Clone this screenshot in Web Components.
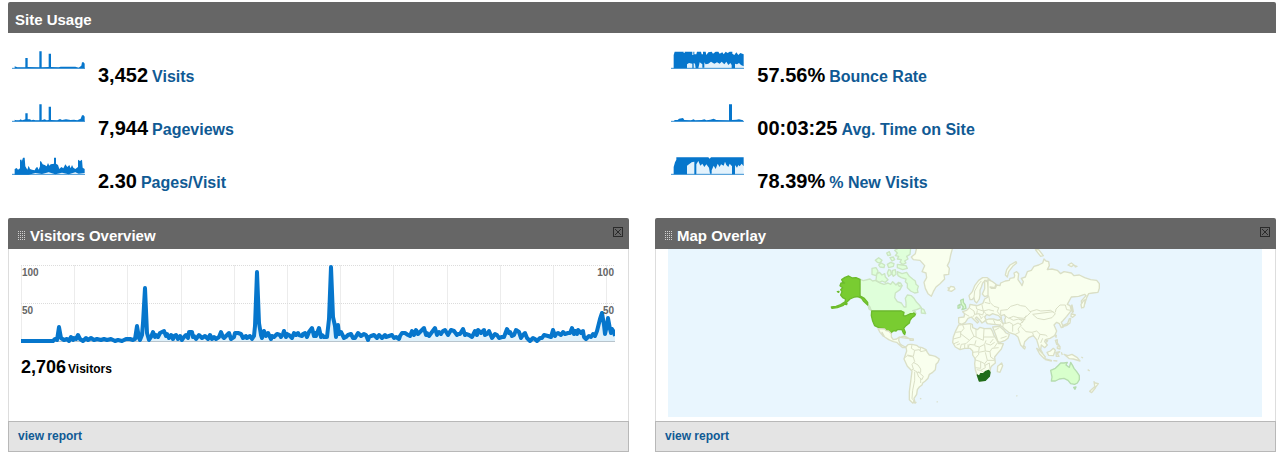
<!DOCTYPE html>
<html lang="en">
<head>
<meta charset="utf-8">
<title>Dashboard</title>
<style>
  body {
    margin: 2px 7px 4px 8px;
    background: #fff;
    color: #000;
    font-family: "Liberation Sans", Arial, sans-serif;
    font-weight: bold;
    --bar: #666666;
    --link: #105a94;
    --data: #0676cc;
  }
</style>
</head>
<body>
<usage-section heading="Site Usage">
  <usage-metric spark="visits" value="3,452">Visits</usage-metric>
  <usage-metric spark="bounce" value="57.56%">Bounce Rate</usage-metric>
  <usage-metric spark="pageviews" value="7,944">Pageviews</usage-metric>
  <usage-metric spark="time" value="00:03:25">Avg. Time on Site</usage-metric>
  <usage-metric spark="pages" value="2.30">Pages/Visit</usage-metric>
  <usage-metric spark="fresh" value="78.39%">% New Visits</usage-metric>
</usage-section>
<panel-row>
  <report-panel heading="Visitors Overview">
    <visitor-chart total="2,706">Visitors</visitor-chart>
  </report-panel>
  <report-panel heading="Map Overlay">
    <world-map></world-map>
  </report-panel>
</panel-row>

<script>
// filled shapes, 219 x 54 grid, baseline at 52
const SPARKS = {
  visits: { area: "M8 52V46L16 49H40V21H47V48L82 49V1H89V49L110 48V8H117V48L140 49 146 47H190L200 50 208 44 210 34H215L218 38V52Z" },
  pageviews: { area: "M8 52V47L12 49 22 49 26 46 30 49 36 47 40 46V28H47V46L54 46 58 49 64 47 70 49H82V1H89V49L98 46 104 49 110 48V8H117V48L136 49 144 45 150 48 162 46 176 48 186 47 196 49 206 44 210 34H215L218 38V52Z" },
  pages: { area: "M8 53V36L14 33 18 38 24 34V8H29V14L33 2H38L40 28 46 38 50 26 54 36 60 38 68 40 72 32 76 30 80 38 84 28V12L88 14 92 22 98 24 104 28 108 18 112 26 116 22 126 20V2H132V20L138 24 142 36 148 30 154 34 160 22 166 30 172 24 176 34 180 24 184 32 190 36 198 30V8L204 12 210 8 212 32 218 36V48L200 50 190 46 170 52 150 47 130 52 110 46 90 51 70 48 50 53Z" },
  bounce: {
    area: "M8 52V12L11 2H38V6H41V2H64V12H67V2H70V10H76L78 2H90L92 10H96V2H104L106 12 112 4 122 2 126 8 134 2H142L146 8 154 4 158 10 164 2 170 6 176 2H184V8L190 12 196 4 202 12 208 6 218 10V46L210 42 204 36 198 40 192 38V52H182V42L178 36 172 42 166 32 160 40 152 32 146 38 138 34 130 38 120 32 112 38 104 40 100 34V50H94V40L86 34 82 52H74L72 38 68 36V52H64V38L54 36 48 40V52Z",
    wash: "M45 32H218V52H45z"
  },
  time: { area: "M10 52V48L20 48 24 44 36 42 40 48 60 49 68 46 72 49 92 48 100 46 106 49 118 47 128 44 136 48 174 49V1H183V48L196 47 204 46 216 49V52Z" },
  fresh: {
    area: "M8 52V30L12 16 16 8V1H112L116 5 120 1H218V28L212 20 206 28 202 24 198 32 192 24V52H183V28L176 20 172 30 166 24 162 14 158 26 150 22 146 30 140 20 134 36 128 26 122 40V50H117L114 32 106 22 100 30 94 20 88 26 82 12 76 22V52H70V14L62 16 54 22 48 26V52Z",
    wash: "M45 14H218V52H45z"
  }
};

class UsageSection extends HTMLElement {
  constructor() {
    super();
    this.attachShadow({ mode: "open" });
    const template = document.createElement("template");
    template.innerHTML = `
      <style>
        :host { display: block; margin-bottom: 25px; }
        h2 {
          margin: 0;
          padding: 4px 7px 0;
          border-radius: 2px 2px 0 0;
          background: var(--bar);
          color: #fff;
          font-size: 15px;
          line-height: 27px;
        }
        .grid {
          display: grid;
          grid-template-columns: 52fr 48fr;
          row-gap: 17px;
          padding: 18px 0 0;
        }
      </style>
      <h2></h2>
      <div class="grid"><slot></slot></div>
    `;
    this.shadowRoot.appendChild(template.content.cloneNode(true));
  }

  connectedCallback() {
    this.shadowRoot.querySelector("h2").textContent = this.getAttribute("heading");
  }
}

class UsageMetric extends HTMLElement {
  constructor() {
    super();
    this.attachShadow({ mode: "open" });
    const template = document.createElement("template");
    template.innerHTML = `
      <style>
        :host { display: flex; gap: 13px; padding-left: 4px; }
        svg { flex: none; width: 73px; height: 18px; }
        .area { fill: var(--data); }
        .wash { fill: #e3f2fc; }
        .base { stroke: #3a91d3; stroke-width: 3; }
        p {
          display: flex;
          align-items: baseline;
          gap: 4px;
          margin: 12px 0 0;
          font-size: 16px;
          line-height: 20px;
        }
        strong { font-size: 20px; line-height: 24px; }
        a { color: var(--link); text-decoration: none; }
      </style>
      <svg viewBox="0 0 219 54" aria-hidden="true">
        <path class="wash"/>
        <path class="base" d="M0 52H219"/>
        <path class="area"/>
      </svg>
      <p><strong></strong><a href="#"><slot></slot></a></p>
    `;
    this.shadowRoot.appendChild(template.content.cloneNode(true));
  }

  connectedCallback() {
    const spark = SPARKS[this.getAttribute("spark")];
    this.shadowRoot.querySelector("strong").textContent = this.getAttribute("value");
    this.shadowRoot.querySelector(".area").setAttribute("d", spark.area);
    this.shadowRoot.querySelector(".wash").setAttribute("d", spark.wash || "");
  }
}

class PanelRow extends HTMLElement {
  constructor() {
    super();
    this.attachShadow({ mode: "open" });
    this.shadowRoot.innerHTML = `
      <style>
        :host { display: grid; grid-template-columns: 1fr 1fr; gap: 26px; }
      </style>
      <slot></slot>
    `;
  }
}

class ReportPanel extends HTMLElement {
  constructor() {
    super();
    this.attachShadow({ mode: "open" });
    const template = document.createElement("template");
    template.innerHTML = `
      <style>
        :host { display: flex; flex-direction: column; min-width: 0; }
        header {
          display: flex;
          align-items: flex-start;
          gap: 4px;
          padding: 4px 6px 0 10px;
          border-radius: 2px 2px 0 0;
          background: var(--bar);
        }
        .grip { flex: none; width: 8px; height: 9px; margin-top: 9px; fill: #d0d0d0; }
        h2 { flex: 1; margin: 0; color: #fff; font-size: 15px; line-height: 27px; }
        button {
          display: block;
          margin: 5px 0 0;
          padding: 0;
          border: 0;
          background: none;
          cursor: pointer;
        }
        button svg { display: block; width: 10px; height: 10px; fill: none; stroke: #2b2b2b; }
        .body {
          flex: 1;
          min-height: 172px;
          padding: 0 12px;
          border: solid #ddd;
          border-width: 0 1px;
        }
        footer {
          padding: 0 9px;
          border: 1px solid #b8b8b8;
          background: #e4e4e4;
          font-size: 12px;
          line-height: 29px;
        }
        a { color: var(--link); text-decoration: none; }
      </style>
      <header>
        <svg class="grip" viewBox="0 0 8 9" shape-rendering="crispEdges" aria-hidden="true">
          <defs><pattern id="dots" width="2" height="2" patternUnits="userSpaceOnUse"><rect width="1" height="1"/></pattern></defs>
          <rect width="8" height="9" style="fill:url(#dots)"/>
        </svg>
        <h2></h2>
        <button type="button" aria-label="Close">
          <svg viewBox="0 0 10 10"><rect x=".5" y=".5" width="9" height="9"/><path d="M2 2l6 6M8 2l-6 6"/></svg>
        </button>
      </header>
      <div class="body"><slot></slot></div>
      <footer><a href="#">view report</a></footer>
    `;
    this.shadowRoot.appendChild(template.content.cloneNode(true));
  }

  connectedCallback() {
    this.shadowRoot.querySelector("h2").textContent = this.getAttribute("heading");
  }
}

// x and height above the base line, one pair per sample
const VISITORS = `0,0 32,0 34,2 36,1 38,14 40,3 43,1 46,2 48,0 50,4 52,1 53,3 55,2 57,6 59,2 62,0 65,3 67,1 70,3 73,1
  76,2 80,1 83,2 86,1 90,2 94,0 97,1 101,0 105,2 109,2 112,1 114,2 116,15 118,3 119,1 121,6 122,18 124,53 126,8 128,1
  130,4 132,9 134,4 135,6 137,4 139,8 143,10 145,5 146,7 148,3 150,6 152,2 153,5 155,6 157,2 159,5 161,1 163,4 165,6
  167,3 168,9 171,9 172,4 173,5 175,2 178,6 181,3 184,5 187,2 189,6 191,2 193,4 195,2 198,4 200,9 202,4 203,3 206,6
  208,8 210,2 213,4 214,8 217,8 220,7 222,3 225,5 226,3 229,5 231,2 233,5 234,15 236,69 238,18 240,6 241,3 243,10
  245,5 247,8 250,2 251,5 253,4 256,7 259,6 260,4 262,7 263,10 265,4 266,7 268,6 271,3 273,8 275,6 277,8 278,6 281,5
  282,7 284,8 286,4 288,9 291,13 293,5 294,8 295,5 298,13 300,4 301,6 303,4 306,4 308,22 310,74 312,24 314,15 315,4
  317,16 318,7 320,9 323,3 325,4 327,6 330,7 332,3 334,3 337,8 340,5 343,7 345,6 347,1 348,4 350,5 353,6 356,3 358,6
  361,3 364,6 365,4 368,5 371,6 373,3 375,4 378,2 379,5 381,8 384,8 387,6 389,5 391,10 393,6 395,11 397,7 400,10
  403,13 405,6 406,8 408,5 411,9 414,13 416,6 418,9 420,7 422,10 424,11 427,6 430,11 433,10 436,6 437,7 439,7 442,12
  444,6 445,7 448,6 451,4 454,10 456,6 457,11 460,8 463,11 464,6 466,7 468,10 471,3 474,7 476,6 478,3 481,4 483,4
  486,12 488,8 489,9 491,5 493,6 495,11 498,9 500,3 502,6 504,8 506,3 509,0 512,3 514,2 516,0 519,3 521,3 523,6 527,5
  530,4 532,11 534,5 535,7 537,8 540,6 542,9 544,7 547,8 549,8 551,13 553,7 554,10 556,7 557,11 560,8 562,10 563,4
  565,2 567,4 568,5 570,4 572,7 574,5 576,10 579,22 581,28 583,16 584,7 586,16 587,23 589,12 590,8 591,12 593,9 594,5`;

class VisitorChart extends HTMLElement {
  constructor() {
    super();
    this.attachShadow({ mode: "open" });
    const template = document.createElement("template");
    template.innerHTML = `
      <style>
        :host { display: block; padding: 14px 1px 0 0; }
        .plot { position: relative; color: #666; font-size: 10px; line-height: 12px; }
        svg { display: block; width: 100%; height: 80px; }
        path { fill: none; vector-effect: non-scaling-stroke; }
        .rule { stroke: #ececec; }
        .level { stroke: #dcdcdc; stroke-dasharray: 1 1; }
        .base { stroke: #b8c4cc; }
        .fill { fill: #dff1fb; }
        .line { stroke: var(--data); stroke-width: 4; stroke-linejoin: round; }
        span { position: absolute; }
        .top { top: 4px; }
        .mid { top: 42px; }
        .left { left: 1px; }
        .right { right: 1px; }
        p { margin: 12px 0 0; font-size: 12px; line-height: 24px; display: flex; align-items: baseline; gap: 2px; }
        strong { font-size: 18px; }
      </style>
      <div class="plot">
        <svg viewBox="0 0 594 80" preserveAspectRatio="none" aria-hidden="true">
          <path class="rule"/>
          <path class="level" d="M0 2.5H594M0 40.5H594"/>
          <path class="fill"/>
          <path class="base" d="M0 78.5H594"/>
          <path class="line"/>
        </svg>
        <span class="top left">100</span><span class="top right">100</span>
        <span class="mid left">50</span><span class="mid right">50</span>
      </div>
      <p><strong></strong><slot></slot></p>
    `;
    this.shadowRoot.appendChild(template.content.cloneNode(true));
  }

  connectedCallback() {
    const root = this.shadowRoot;
    const points = VISITORS.trim().split(/\s+/).map((pair) => {
      const [x, h] = pair.split(",").map(Number);
      return `${x} ${78 - h}`;
    });
    let rules = "";
    for (let i = 0; i < 12; i++) {
      rules += `M${Math.round(i * 53.2) + 0.5} 2V78`;
    }
    root.querySelector(".rule").setAttribute("d", rules);
    root.querySelector(".line").setAttribute("d", "M" + points.join("L"));
    root.querySelector(".fill").setAttribute("d", "M0 78L" + points.join("L") + "V78Z");
    root.querySelector("strong").textContent = this.getAttribute("total");
  }
}

class WorldMap extends HTMLElement {
  constructor() {
    super();
    this.attachShadow({ mode: "open" });
    const template = document.createElement("template");
    template.innerHTML = `
      <style>
        :host { display: block; padding-right: 1px; }
        svg { display: block; width: 100%; height: 168px; background: #e9f6fe; }
        path { fill: #f9ffee; stroke: #dadfc6; stroke-width: 4; stroke-linejoin: round; }
        .few { fill: #dfffda; stroke: #cbe5c2; }
        .some { fill: #d8ffcc; stroke: #b5dcae; }
        .many { fill: #79cc31; stroke: #6cbb2c; }
        .most { fill: #1f6c1a; stroke: #1f6c1a; }
        .border { fill: none; stroke-width: 3; }
        .sea { fill: #e9f6fe; }
      </style>
      <svg viewBox="0 0 1782 504" role="img" aria-label="Visits by country">
        <!-- Americas -->
        <g transform="translate(456 -12)">
          <path d="M290 8H398L392 30 388 50 382 62 388 70 386 88 372 90 374 102 360 116 348 126 340 140 334 154 324 146 316 130 312 112 320 98 318 84 306 80 314 62 300 46 280 44 274 36 286 26Z"/>
          <path d="M384 128l4 2 4-6 10 2 3 6-11 7-10-3 4-4z"/>
          <path class="few" d="M120 103L130 107 150 102 158 108 166 106 180 114 192 118 204 114 212 118 218 110 228 120 236 112 246 122 240 134 226 144 224 158 232 170 244 174 252 186 258 186 258 172 256 160 262 150 274 152 282 160 290 172 298 180 304 188 290 194 278 197 286 200 288 206 272 206 262 212 252 212 244 198 155 198 146 182 134 162 124 156 120 152Z"/>
          <path class="few" d="M304 190l8 4 5 12-13-2zM232 80L246 86 260 82 268 94 278 102 286 108 288 118 295 124 292 134 294 142 284 144 272 138 262 128 262 116 256 110 258 102 244 98 234 92ZM170 88l8-6 8 8 8-4 2 10 8 8-8 8-10-4-8 4-10-6zM156 70l12-2 6 10-6 14-12-4zM166 46l10-8 10 8-6 8-8-2zM176 60l8-6 10 6-2 8-12-2zM202 58l10-6 10 4-2 8-14 4zM206 74l6 2 2 12-8 6-4-10zM218 76l8-2 2 14-8 6-4-8zM200 24l8-4 4 10-8 2zM210 38l10-2 4 8-8 4zM224 16L238 8 272 8 270 28 260 34 264 42 254 48 258 54 248 58 240 52 244 44 232 42 236 34 226 32 232 24ZM232 58l14 2 12 2 4 8-14 4-16-6zM232 116l10-2 4 8-8 2z"/>
          <path class="few" d="M144 180l6 6 3 10-6-4z"/>
          <path class="many" d="M120 103L108 98 97 99 86 93 75 97 65 104 68 110 74 114 63 114 60 122 68 128 62 134 66 140 62 150 68 158 76 162 76 170 62 179 48 184 34 186 36 190 52 188 70 181 80 172 90 162 104 156 113 155 124 159 130 168 143 180 143 172 133 160 124 155 120 152ZM52 140l5-1-1 3zM76 178l5-3-1 4z"/>
          <path class="many" d="M155 198H244L252 202 250 212 256 213 272 206 279 205 282 204 286 208 284 212 276 218 270 226 268 234 258 242 251 250 256 262 254 269 250 264 246 254 232 254 228 258 222 257 216 260 214 265 206 257 198 256 194 251 178 249 164 242 158 228 154 212Z"/>
          <path d="M174 251L194 252 198 257 206 258 214 266 214 276 220 284 230 282 238 276 236 286 240 296 248 302 256 306 264 302 258 308 248 308 236 298 230 292 220 290 206 284 194 276 186 262 190 274 180 262Z"/>
          <path d="M240 277l14-4 14 8-12-2zM270 281l10 1 0 4-10 0z"/>
          <path d="M258 306L264 299 270 298 276 298 290 301 296 306 306 308 318 314 322 322 328 330 338 332 346 334 358 342 354 352 348 358 346 374 338 382 328 388 324 400 316 408 308 414 306 420 298 426 292 434 290 448 282 460 284 468 278 474 268 464 268 440 272 410 276 378 262 364 252 342 256 330 260 318Z"/>
          <path class="border" d="M276 298l-2 12 10 6-4 18-18-4M254 338l8-6 18 4 4 14-8 8 4 14-6 4M284 316l14-2 4 6 18-4M302 308l-2 10M280 352l14 8 8 12 0 10-10 0-12-8M294 380l16 14-4 10-10-8-6-16M284 380l0 26-6 30-2 24 6 8M302 400l0 14"/>
          <path d="M282 470l6 2-2 2-6-1zM300 460l4 2M350 470l3 1"/>
        </g>
        <!-- Eurasia, Africa, Oceania -->
        <g transform="translate(816 -12)">
          <path d="M90 164L87 152 97 140 104 122 116 106 128 98 142 98 150 104 136 106 128 114 124 126 120 136 120 150 118 162 110 174 104 168 102 158 96 164Z"/>
          <path class="border" d="M102 158l2-20 10-18 10-12"/>
          <path d="M134 106L142 110 146 130 150 150 134 155 127 147 134 131Z"/>
          <path d="M144 104L158 110 168 118 164 128 150 126 154 130 166 130 170 120 180 122 182 114 196 108 208 106 210 100 222 98 224 92 222 84 230 80 236 86 234 104 244 118 246 122 250 110 244 100 256 96 262 80 274 76 282 64 296 60 308 54 312 42 318 48 326 50 328 62 322 74 336 72 352 76 362 86 372 80 394 84 402 92 418 90 434 98 452 104 470 106 478 116 478 130 474 142 458 144 446 146 440 158 430 188 426 184 424 168 438 152 434 148 416 154 394 156 382 178 390 182 394 196 380 214 368 228 364 232 370 246 364 248 358 236 350 232 342 240 350 258 344 272 330 280 316 284 314 290 322 300 314 308 304 300 302 314 308 324 300 318 296 304 290 284 280 272 266 278 254 290 250 308 242 300 234 276 224 268 206 262 194 252 188 246 178 240 160 238 142 236 136 226 146 222 160 222 174 226 184 222 176 212 164 208 158 206 148 212 140 208 134 216 138 224 132 230 126 234 120 226 110 216 106 220 116 230 112 234 102 224 94 216 84 220 76 232 66 238 56 234 56 218 72 216 74 206 68 200 80 196 88 188 90 178 100 180 112 182 128 176 134 162 144 156Z"/>
          <path class="border" d="M146 152l4 20 12 12 14 4-4 12 10 12M134 172l16 4M108 182l2 10 20 6 16-4 16 4M126 180l4 18M90 190l12 8 2 10 12-2 12 4 4-12M74 206l14 8M104 208l-6 8M112 196l-2 12M116 206l8 14M138 206l-8-8M130 214l-8 8M182 210l0-14 20-2 10-10 20-6 10 4 14 2 16 18-10 10-12 8-16-2-14-4-14 6-10-8M270 200l20-6 12 4 30-2 14 10-10 12-24 6-20-4-14-12 62-8M346 202l2-10 12-12 16 0 4 14 12 2M258 212l-4 10-8 12M206 218l14 8 16-4 12 6-8 10M182 236l-4 8M176 224l14 12-2 10M194 236l14-4 10 6 0 22M218 242l16-8 10 6-10 12 4 10-12 6M244 246l14 14 18 2 14-4 10 10 16 2 6 4M278 264l4 12M300 268l-6 16M308 280l-6 14M160 224l6 14M236 222l20 2"/>
          <path class="sea" d="M183 212l10-3 4 8-3 6 2 11-8 1-3-9z"/>
          <path d="M158 246L178 244 190 254 198 264 208 268 204 280 196 286 180 292 174 290 168 272Z"/>
          <path class="border" d="M164 256l14-8M182 280l18-6"/>
          <path d="M56 240L72 238 90 236 97 238 98 248 112 254 120 247 134 251 152 250 158 260 162 272 170 284 176 296 190 296 184 312 172 326 164 336 166 354 156 362 152 368 150 382 146 394 134 406 118 408 112 392 106 374 104 356 106 342 98 330 98 318 90 310 74 310 60 314 46 306 38 292 40 276 46 260Z"/>
          <path class="border" d="M46 262l18-2 8-10-4-10M62 260l0 16-22 6M62 266l26 20-10 10-14 2-4 14M88 286l14-12 6 2 0-24M92 238l0 14 10 22M108 276l22 10 2-34M132 276h30M108 286l-4 14-16-2-4 12M104 302l14 4 16-8 4-12M118 306l-2 14-18 2M138 296l14 4 12-8M134 300l2 18-20 4 0 6-12 14M136 318l14 2 6-10 20-2M136 322l6 24-8 10-12-6-18-6M150 320l2 16 12 8M142 346l22 0M122 350l0 20-16-2M134 356l2 12-14 8M134 362l14-8 2 20M110 374l12 2 12 8M56 290l-14 6M50 300l10-4M74 298v12M84 298v10M160 282l-10 12M172 294l-10 14"/>
          <path d="M173 364l12-10 3 8-8 20-8-2z"/>
          <path class="some" d="M62 166l8-4 0 10 6 8 2 10-12 4 4-8-6-8zM54 182l6-4 0 10-6 2z"/>
          <path class="most" d="M112 390l6 4 4-8 8 0 6-6 10-4 4 6-2 12-12 12-18 2z"/>
          <path class="some" d="M332 376L346 370 354 362 362 354 372 354 382 352 378 360 388 367 392 352 398 362 402 370 410 380 418 392 418 404 412 414 404 418 392 416 384 406 372 400 358 402 346 408 334 408 336 396ZM401 427l7-1-3 7z"/>
          <path d="M228 50l-18 10-10 14-4 16 6 6 4-16 12-16 12-10zM286 14h10l14 18-8 2zM384 60l10-6 8 6-8 5zM404 62l7 2-5 2zM430 168l6-4-4 22-7 3-2-10z"/>
          <path d="M396 180l4 20-3 2-4-18zM394 206l12 4-8 7-5-3zM392 220l-2 14-9 7-13 4 1-4 14-6 5-14zM346 270l3 1-1 6zM318 286l5 1-3 4z"/>
          <path d="M346 286l6-2 0 10 6 8-8-4zM352 306l8-2 0 8-8-2zM290 310l8 6 10 10 8 10-3 5-14-14zM316 342l18 4 0 2-18-4zM321 322l10-4 9-8 6 6-6 16-14-1zM348 322l11-2-7 6 5 8-8 0zM340 347l12 1M364 322l3 8M372 328l12 4 12-4 16 10 8 10-20-6-12-1zM424 336l5 3M443 374l6 4"/>
          <path d="M462 410l4 4 9 2-9 12-2-6zM463 426l-14 13 6 4 11-14zM250 302l6 4-2 6-4-3zM229 452l3 1"/>
        </g>
      </svg>
    `;
    this.shadowRoot.appendChild(template.content.cloneNode(true));
  }
}

customElements.define("usage-section", UsageSection);
customElements.define("usage-metric", UsageMetric);
customElements.define("panel-row", PanelRow);
customElements.define("report-panel", ReportPanel);
customElements.define("visitor-chart", VisitorChart);
customElements.define("world-map", WorldMap);
</script>
</body>
</html>
